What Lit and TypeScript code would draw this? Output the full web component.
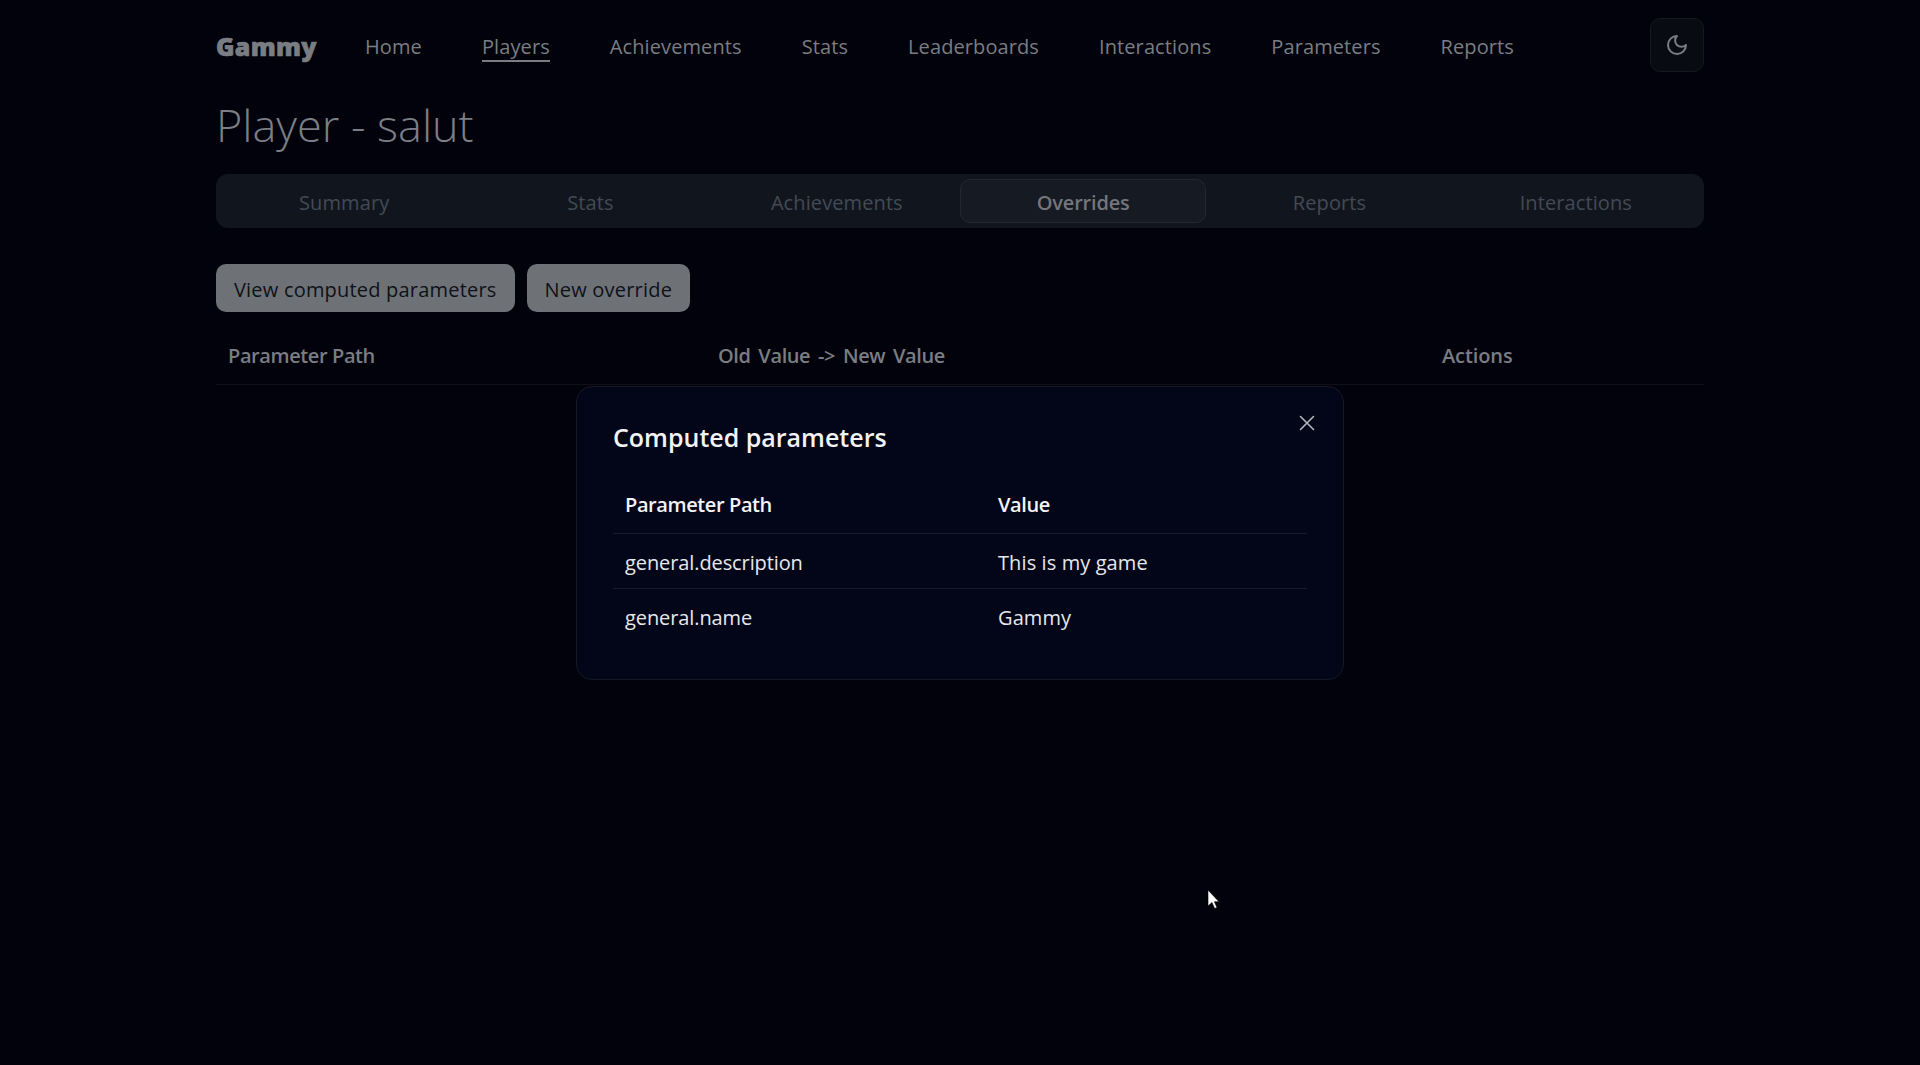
import { LitElement, html, css } from "lit";
import { customElement } from "lit/decorators.js";

const NAV = ["Home", "Players", "Achievements", "Stats", "Leaderboards", "Interactions", "Parameters", "Reports"];
const TABS = ["Summary", "Stats", "Achievements", "Overrides", "Reports", "Interactions"];
const PARAMS = [
  ["general.description", "This is my game"],
  ["general.name", "Gammy"],
];

@customElement("app-root")
export class AppRoot extends LitElement {
  static styles = css`
    :host {
      display: block;
      position: relative;
      height: 1065px;
      overflow: hidden;
      background: #01020b;
      font-family: "Open Sans", "Noto Sans", sans-serif;
      font-size: 20px;
      letter-spacing: 0.1px;
      color: #7a7d82;
    }
    .page {
      width: 1488px;
      margin: 0 auto;
    }
    .navbar {
      display: flex;
      align-items: center;
      height: 90px;
    }
    .logo {
      width: 149px;
      margin-top: 2px;
      font-family: "Noto Sans", "Open Sans", sans-serif;
      font-size: 25px;
      font-weight: 900;
      letter-spacing: 0.3px;
      -webkit-text-stroke: 0.7px #7a7d82;
    }
    .links {
      display: flex;
      flex: 1;
      gap: 60px;
      margin-top: 5px;
    }
    .links a {
      border-bottom: 2px solid transparent;
      line-height: 27px;
    }
    .links a.active {
      border-bottom-color: #7a7d82;
    }
    .theme {
      display: flex;
      align-items: center;
      justify-content: center;
      width: 54px;
      height: 54px;
      box-sizing: border-box;
      border: 1px solid #15181f;
      border-radius: 10px;
      background: #090b12;
    }
    h1 {
      margin: 10px 0 24px;
      font-size: 45px;
      font-weight: 300;
      line-height: 50px;
      letter-spacing: 0;
      color: #7b7e85;
    }
    .tabs {
      display: grid;
      grid-template-columns: repeat(6, 1fr);
      height: 54px;
      box-sizing: border-box;
      padding: 5px;
      border-radius: 12px;
      background: #11161e;
    }
    .tab {
      display: flex;
      align-items: center;
      justify-content: center;
      padding-top: 2px;
      border: 1px solid transparent;
      border-radius: 10px;
      color: #434a55;
    }
    .tab.active {
      border-color: #23272f;
      background: #161a22;
      color: #73767b;
      font-weight: 600;
      letter-spacing: -0.2px;
    }
    .actions {
      display: flex;
      gap: 12px;
      margin-top: 36px;
    }
    .btn {
      display: flex;
      align-items: center;
      height: 48px;
      box-sizing: border-box;
      padding: 2px 18px 0;
      border-radius: 10px;
      background: #6e7277;
      color: #0e1118;
      font-weight: 500;
      letter-spacing: 0.2px;
    }
    table {
      width: 100%;
      table-layout: fixed;
      border-collapse: collapse;
    }
    .overrides {
      margin-top: 12px;
    }
    .overrides th {
      height: 58px;
      padding: 2px 12px 0;
      border-bottom: 1px solid #0e1117;
      text-align: left;
      font-weight: 600;
      letter-spacing: -0.4px;
    }
    .c1 { width: 466px; }
    .overrides th.c2 { word-spacing: 3px; }
    .overrides th.c3 { width: 250px; letter-spacing: -0.1px; }
    .modal {
      position: absolute;
      top: 386px;
      left: 576px;
      width: 768px;
      height: 294px;
      box-sizing: border-box;
      padding: 34px 36px 36px;
      border: 1px solid #161925;
      border-radius: 16px;
      background: #030518;
      color: #e6e8ec;
    }
    .modal h2 {
      margin: 0 0 25px;
      font-size: 25px;
      font-weight: 600;
      line-height: 32px;
      letter-spacing: 0;
      color: #f2f3f5;
    }
    .close {
      position: absolute;
      top: 28px;
      right: 28px;
      display: block;
      color: #b4b6bb;
    }
    .modal th,
    .modal td {
      padding: 2px 12px 0;
      text-align: left;
      border-bottom: 1px solid #171a28;
    }
    .modal th {
      height: 53px;
      padding: 0 12px 2px;
      font-weight: 600;
      letter-spacing: -0.4px;
      color: #f2f3f5;
    }
    .modal td {
      height: 52px;
    }
    .modal td.key {
      letter-spacing: -0.1px;
    }
    .modal tr:last-child td {
      border-bottom: 0;
    }
    .m1 { width: 349px; }
    .cursor {
      position: absolute;
      top: 890px;
      left: 1207px;
      display: block;
    }
  `;

  render() {
    return html`
      <div class="page">
        <header class="navbar">
          <div class="logo">Gammy</div>
          <nav class="links">
            ${NAV.map((n) => html`<a class=${n === "Players" ? "active" : ""}>${n}</a>`)}
          </nav>
          <div class="theme">
            <svg width="24" height="24" viewBox="0 0 24 24" fill="none" stroke="#7a7d82" stroke-width="2" stroke-linecap="round" stroke-linejoin="round">
              <path d="M12 3a6 6 0 0 0 9 9 9 9 0 1 1-9-9Z" />
            </svg>
          </div>
        </header>
        <h1>Player - salut</h1>
        <div class="tabs">
          ${TABS.map((t) => html`<div class="tab ${t === "Overrides" ? "active" : ""}">${t}</div>`)}
        </div>
        <div class="actions">
          <div class="btn">View computed parameters</div>
          <div class="btn">New override</div>
        </div>
        <table class="overrides">
          <thead>
            <tr>
              <th class="c1">Parameter Path</th>
              <th class="c2">Old Value -&gt; New Value</th>
              <th class="c3">Actions</th>
            </tr>
          </thead>
        </table>
      </div>
      <section class="modal">
        <h2>Computed parameters</h2>
        <svg class="close" width="16" height="16" viewBox="0 0 16 16" fill="none" stroke="currentColor" stroke-width="1.6" stroke-linecap="round">
          <path d="M1.5 1.5l13 13M14.5 1.5l-13 13" />
        </svg>
        <table>
          <thead>
            <tr><th class="m1">Parameter Path</th><th>Value</th></tr>
          </thead>
          <tbody>
            ${PARAMS.map(([k, v]) => html`<tr><td class="key">${k}</td><td>${v}</td></tr>`)}
          </tbody>
        </table>
      </section>
      <svg class="cursor" width="13" height="20" viewBox="0 0 13 20">
        <path d="M1 0v16l4-3.5 2.6 6 2.4-1-2.6-5.8H12Z" fill="#fff" stroke="#000" stroke-width="0.6" />
      </svg>
    `;
  }
}
